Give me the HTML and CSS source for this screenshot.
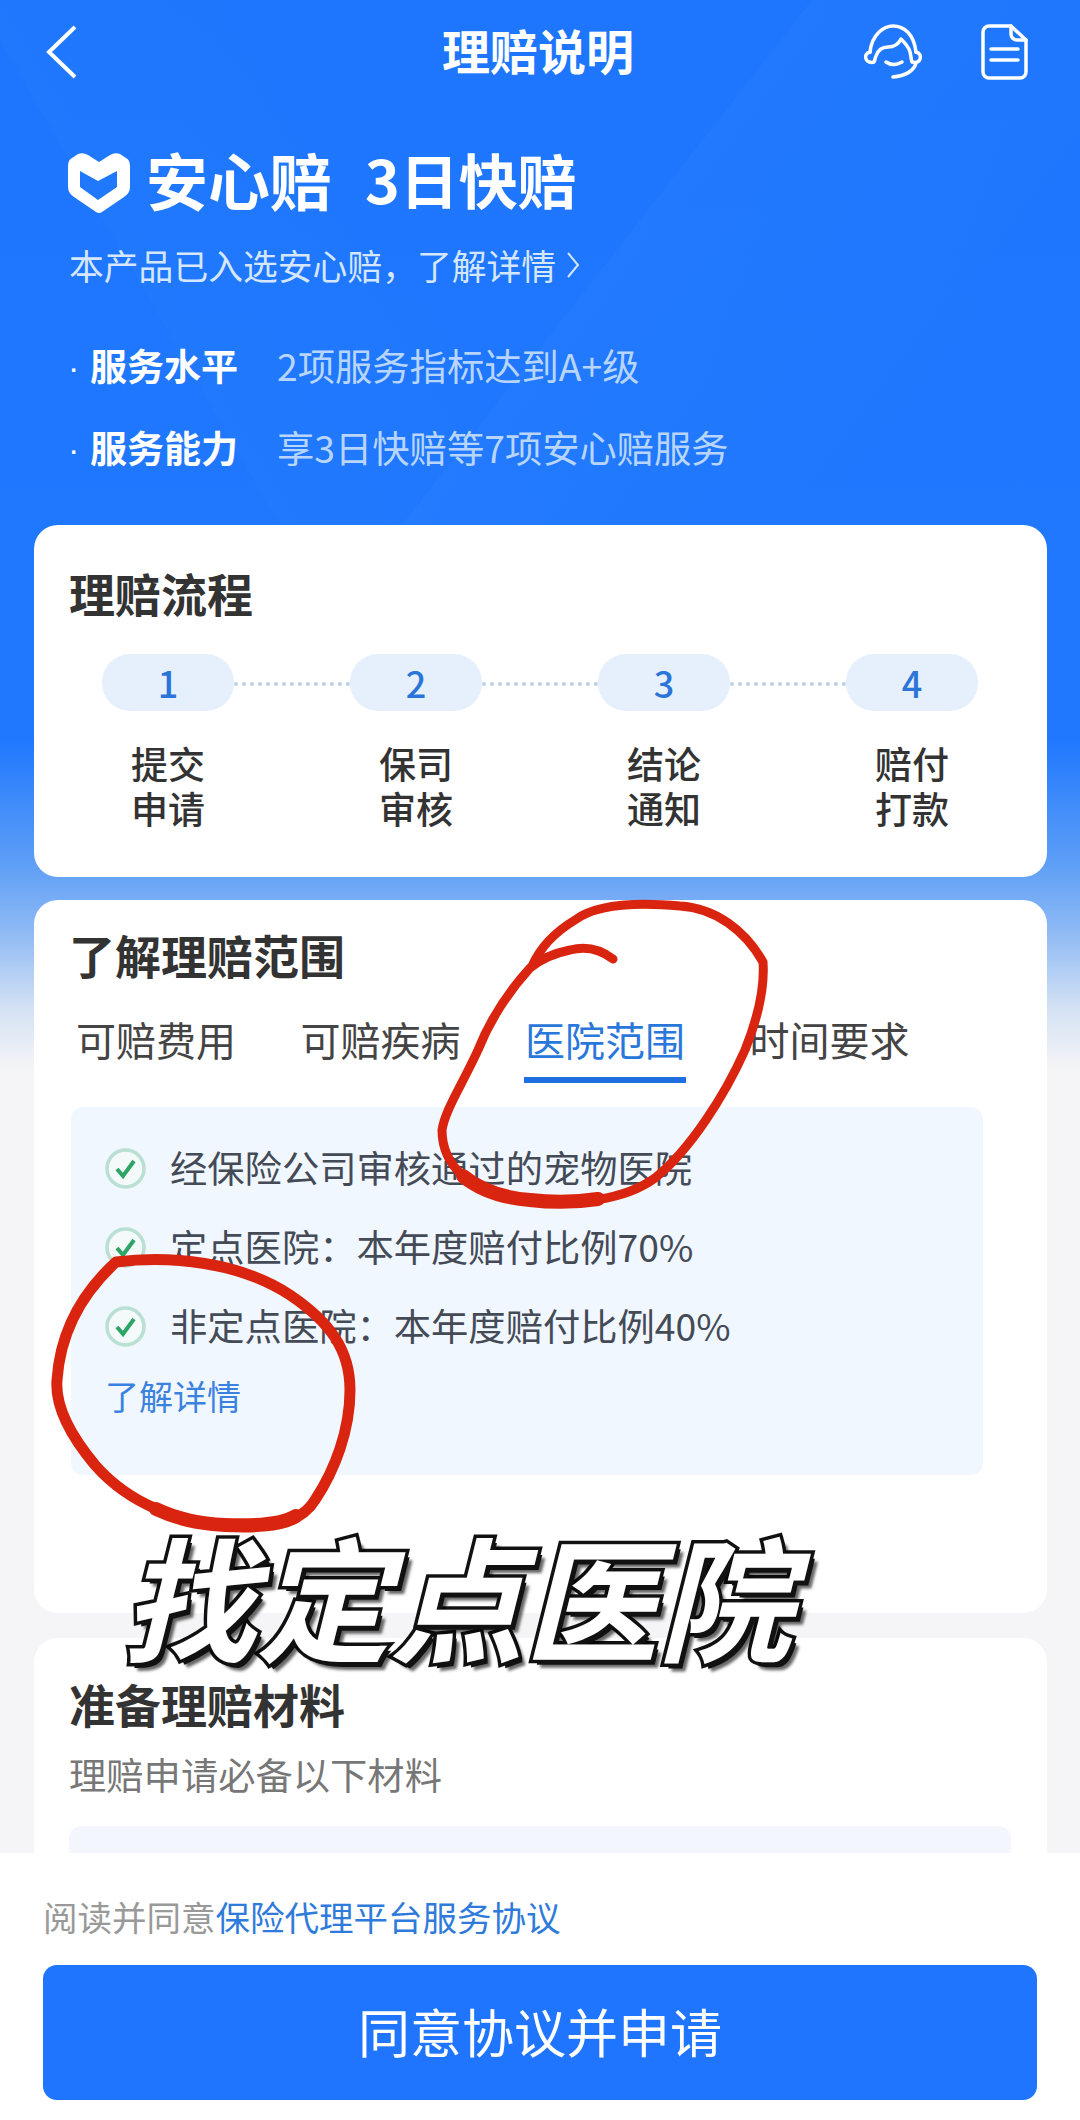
FILE: index.html
```html
<!DOCTYPE html>
<html lang="zh-CN">
<head>
    <meta charset="UTF-8">
    <title>理赔说明</title>
    <link rel="stylesheet" href="styles.css">
</head>
<body>

<div class="page">
    <div class="nav">
        <svg class="back-icon" viewBox="0 0 32 54" width="32" height="54">
            <path d="M29 2 L3 27 L29 52" />
        </svg>
        <div class="nav-title">理赔说明</div>
        <div class="nav-icons">
            <svg class="line-icon" viewBox="0 0 58 56" width="58" height="56">
                <path d="M6 28 C8 10 20 2 29 2 C40 2 50 10 52 28" />
                <path d="M6 28 C2 29 1 32 2 35 C3 38 7 39 10 38 C11 36 11 34 12 32 C14 26 18 23 24 23 C30 23 34 21 37 15 C41 19 45 23 46 28 C47 32 47 35 48 38 C52 39 55 38 56 35 C57 32 56 29 52 28" />
                <path d="M22 38 Q29 43 38 38" />
                <path d="M52 39 C50 47 41 52 29 53" />
            </svg>
            <svg class="line-icon" viewBox="0 0 47 56" width="47" height="56">
                <path d="M30 2 H8 A6 6 0 0 0 2 8 V48 A6 6 0 0 0 8 54 H39 A6 6 0 0 0 45 48 V16 Z" />
                <path d="M30 2 V10 A6 6 0 0 0 36 16 H45" />
                <path d="M10 25 H37 M10 36 H37" />
            </svg>
        </div>
    </div>

    <div class="brand">
        <svg class="brand-logo" viewBox="0 0 62 61" width="62" height="61">
            <path fill-rule="evenodd" d="M10 1 Q15 -1 20 2 L31 9 L42 2 Q47 -1 52 1 L58 5 Q62 7 62 13 V34 Q62 40 56 44 L34 59 Q31 61 28 59 L6 44 Q0 40 0 34 V13 Q0 7 4 5 Z M12 18 L30 28 L49 18 V34 L30 47 L12 34 Z" />
        </svg>
        <span class="brand-name">安心赔</span>
        <span class="brand-name tight">3日快赔</span>
    </div>
    <div class="brand-sub">
        本产品已入选安心赔，了解详情
        <svg class="sub-arrow" viewBox="0 0 14 28" width="14" height="28">
            <path d="M2 2 L12 14 L2 26" />
        </svg>
    </div>

    <div class="service-row first">
        <span class="service-dot">·</span>
        <span class="service-name">服务水平</span>
        <span class="service-desc">2项服务指标达到A+级</span>
    </div>
    <div class="service-row">
        <span class="service-dot">·</span>
        <span class="service-name">服务能力</span>
        <span class="service-desc">享3日快赔等7项安心赔服务</span>
    </div>

    <div class="card card-flow">
        <div class="card-title">理赔流程</div>
        <div class="step-track">
            <div class="step-pill">1</div>
            <div class="step-line"></div>
            <div class="step-pill">2</div>
            <div class="step-line"></div>
            <div class="step-pill">3</div>
            <div class="step-line"></div>
            <div class="step-pill">4</div>
        </div>
        <div class="step-labels">
            <div>提交<br>申请</div>
            <div>保司<br>审核</div>
            <div>结论<br>通知</div>
            <div>赔付<br>打款</div>
        </div>
    </div>

    <div class="card card-scope">
        <div class="card-title">了解理赔范围</div>
        <div class="tabs">
            <div class="tab">可赔费用</div>
            <div class="tab">可赔疾病</div>
            <div class="tab active">医院范围</div>
            <div class="tab">时间要求</div>
        </div>
        <div class="scope-panel">
            <div class="scope-row">
                <svg class="check-icon" viewBox="0 0 41 41" width="41" height="41">
                    <circle cx="20.5" cy="20.5" r="18.5" />
                    <path d="M12 21 L18 28 L29 13" />
                </svg>
                <span class="scope-text">经保险公司审核通过的宠物医院</span>
            </div>
            <div class="scope-row">
                <svg class="check-icon" viewBox="0 0 41 41" width="41" height="41">
                    <circle cx="20.5" cy="20.5" r="18.5" />
                    <path d="M12 21 L18 28 L29 13" />
                </svg>
                <span class="scope-text">定点医院：本年度赔付比例70%</span>
            </div>
            <div class="scope-row">
                <svg class="check-icon" viewBox="0 0 41 41" width="41" height="41">
                    <circle cx="20.5" cy="20.5" r="18.5" />
                    <path d="M12 21 L18 28 L29 13" />
                </svg>
                <span class="scope-text">非定点医院：本年度赔付比例40%</span>
            </div>
            <div class="scope-link">了解详情</div>
        </div>
    </div>

    <div class="card card-docs">
        <div class="card-title">准备理赔材料</div>
        <div class="docs-sub">理赔申请必备以下材料</div>
        <div class="docs-panel"></div>
    </div>

    <div class="bottom-bar">
        <div class="agree">阅读并同意<span class="agree-link">保险代理平台服务协议</span></div>
        <div class="apply-btn">同意协议并申请</div>
    </div>

    <!-- red marker circles drawn over the screenshot -->
    <svg class="marks" viewBox="0 0 1080 2120" width="1080" height="2120">
        <path d="M613 959 C600 949 585 946 570 950 C555 953 542 958 530 968 C510 990 492 1015 478 1050 C462 1085 445 1110 442 1130 C442 1165 470 1195 530 1200 C575 1206 625 1200 655 1178 C690 1150 725 1095 745 1050 C757 1020 765 990 763 962 C745 930 715 908 680 906 C635 902 595 905 575 920 C555 932 540 948 532 966" />
        <path class="mark-thick" d="M116 1262 C170 1255 240 1262 290 1295 C330 1322 350 1350 350 1390 C350 1430 335 1470 315 1500 C300 1525 270 1527 225 1525 C180 1522 130 1505 95 1465 C70 1435 55 1405 57 1380 C60 1335 80 1295 116 1262" />
        <path class="mark-heavy" d="M156 1509 C175 1518 200 1524 225 1525 C250 1526 280 1526 296 1516" />
        <path class="mark-heavy" d="M463 1176 C480 1190 505 1198 530 1200 C555 1203 578 1202 598 1199" />
    </svg>

    <div class="sticker">找定点医院</div>
</div>

</body>
</html>
```

FILE: styles.css
```css
* {
    box-sizing: border-box;
}

html, body {
    margin: 0;
    padding: 0;
}

body {
    font-family: "Noto Sans CJK SC", "Noto Sans", sans-serif;
    color: #333;
}

.page {
    position: relative;
    width: 1080px;
    height: 2120px;
    overflow: hidden;
    background:
        linear-gradient(128deg, transparent 0, transparent 640px, rgba(255, 255, 255, 0.02) 640px, rgba(255, 255, 255, 0) 1000px) 0 0 / 100% 700px no-repeat,
        linear-gradient(60deg, transparent 0, transparent 330px, rgba(255, 255, 255, 0.012) 330px, rgba(255, 255, 255, 0) 620px) 0 0 / 100% 700px no-repeat,
        linear-gradient(180deg, #1d76fd 0, #1f78fe 740px, #5b9df6 860px, #8db9f4 930px, #d5e2f4 1010px, #f5f5f7 1070px, #f5f5f7 100%);
}

/* top bar */
.nav {
    display: grid;
    grid-template-columns: 1fr auto 1fr;
    align-items: center;
    height: 104px;
    padding: 0 52px 0 46px;
}

.back-icon {
    fill: none;
    stroke: #fff;
    stroke-width: 4;
}

.nav-title {
    font-size: 48px;
    font-weight: 700;
    line-height: 60px;
    color: #fff;
    margin: 0 0 7px 2px;
}

.nav-icons {
    display: flex;
    justify-content: flex-end;
    gap: 59px;
}

.line-icon {
    fill: none;
    stroke: #fff;
    stroke-width: 3.5;
    stroke-linecap: round;
    stroke-linejoin: round;
}

/* brand block */
.brand {
    display: flex;
    align-items: center;
    height: 62px;
    margin-top: 48px;
    padding-left: 68px;
    color: #fff;
}

.brand-logo {
    fill: #fff;
    margin-right: 16px;
}

.brand-name {
    font-size: 62px;
    font-weight: 700;
    line-height: 52px;
    margin: 0 33px 9px 0;
}

.brand-name.tight {
    font-size: 59px;
}

.brand-sub {
    display: flex;
    align-items: center;
    height: 40px;
    margin-top: 31px;
    padding-left: 69px;
    font-size: 34.8px;
    color: #d5e6ff;
}

.sub-arrow {
    fill: none;
    stroke: #d5e6ff;
    stroke-width: 2;
    margin-left: 10px;
}

.service-row {
    display: flex;
    align-items: center;
    height: 40px;
    margin-top: 42px;
    padding-left: 68px;
    color: #fff;
}

.service-row.first {
    margin-top: 60px;
}

.service-dot {
    width: 22px;
    margin-top: 5px;
    font-family: "Liberation Sans", sans-serif;
    font-size: 34px;
}

.service-name {
    width: 187px;
    font-size: 37px;
    font-weight: 700;
}

.service-desc {
    font-size: 37.3px;
    color: #b7d5ff;
}

/* cards */
.card {
    width: 1013px;
    margin-left: 34px;
    padding: 0 35px;
    background: #fff;
    border-radius: 24px;
}

.card-title {
    height: 60px;
    font-size: 46px;
    font-weight: 700;
    line-height: 56px;
    color: #333;
}

.card-flow {
    height: 352px;
    margin-top: 58px;
    padding-top: 39px;
}

.step-track {
    display: flex;
    align-items: center;
    margin: 30px 0 0 33px;
}

.step-pill {
    width: 132px;
    height: 57px;
    border-radius: 28px;
    background: #e6f0fd;
    color: #2b74d9;
    font-size: 36px;
    font-weight: 500;
    line-height: 57px;
    text-align: center;
}

.step-line {
    width: 116px;
    margin-top: 3px;
    border-top: 4px dotted #bcd1ea;
}

.step-labels {
    display: grid;
    grid-template-columns: repeat(4, 248px);
    margin: 30px 0 0 -25px;
    font-size: 37px;
    font-weight: 500;
    line-height: 45px;
    text-align: center;
    color: #333;
}

.card-scope {
    height: 713px;
    margin-top: 23px;
    padding-top: 26px;
}

.tabs {
    display: flex;
    gap: 62.5px;
    margin-top: 28px;
    padding-left: 6px;
}

.tab {
    padding: 0 1px 13px;
    border-bottom: 6px solid transparent;
    font-size: 40px;
    line-height: 50px;
    color: #444;
}

.tab.active {
    color: #2a77dc;
    border-bottom-color: #1f6fe0;
}

.scope-panel {
    width: 912px;
    height: 368px;
    margin: 24px 0 0 2px;
    padding: 41px 0 0 34px;
    background: #f1f7ff;
    border-radius: 12px;
}

.scope-row {
    display: flex;
    align-items: center;
    gap: 24px;
    height: 41px;
    margin-bottom: 38px;
    font-size: 37.3px;
    color: #444b57;
}

.scope-text {
    margin-bottom: 4px;
}

.check-icon {
    flex: none;
}

.check-icon circle {
    fill: #f4faf9;
    stroke: #b9e0d2;
    stroke-width: 3.5;
}

.check-icon path {
    fill: none;
    stroke: #2ea566;
    stroke-width: 4;
}

.scope-link {
    margin-top: -9px;
    font-size: 34px;
    line-height: 40px;
    color: #3b82e0;
}

.card-docs {
    height: 400px;
    margin-top: 25px;
    padding-top: 37px;
}

.docs-sub {
    margin-top: 19px;
    font-size: 37.3px;
    line-height: 40px;
    color: #777;
}

.docs-panel {
    width: 942px;
    height: 100px;
    margin-top: 32px;
    background: #f3f6fc;
    border-radius: 12px;
}

/* fixed footer */
.bottom-bar {
    position: absolute;
    left: 0;
    right: 0;
    bottom: 0;
    height: 267px;
    padding: 43px 43px 0;
    background: #fff;
}

.agree {
    font-size: 34.5px;
    line-height: 40px;
    color: #999;
}

.agree-link {
    color: #2f7bdc;
}

.apply-btn {
    height: 135px;
    margin-top: 29px;
    background: #1f75fe;
    border-radius: 14px;
    font-size: 52px;
    line-height: 131px;
    text-align: center;
    color: #fff;
}

/* annotations on top of the page */
.marks {
    position: absolute;
    left: 0;
    top: 0;
    fill: none;
    stroke: #d9250f;
    stroke-width: 9;
    stroke-linecap: round;
}

.mark-thick {
    stroke-width: 11;
}

.mark-heavy {
    stroke-width: 14;
}

.sticker {
    position: absolute;
    left: 122px;
    top: 1514px;
    font-size: 134px;
    font-weight: 700;
    font-style: italic;
    line-height: 160px;
    white-space: nowrap;
    color: #fff;
    -webkit-text-stroke: 7px #111;
    paint-order: stroke fill;
    text-shadow: 4px 5px 0 #111, 7px 8px 3px rgba(0, 0, 0, 0.6);
}
```
